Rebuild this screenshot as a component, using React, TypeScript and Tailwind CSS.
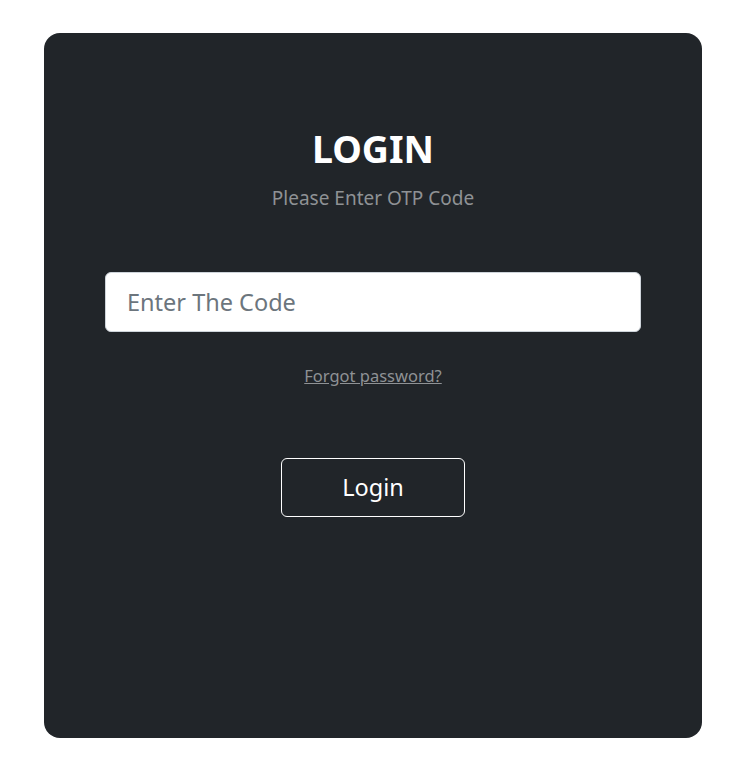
export default function App() {
  return (
    <div
      className="min-h-screen bg-white px-[44px] pt-[33px] pb-[26px]"
      style={{ fontFamily: '"Noto Sans", "Open Sans", sans-serif' }}
    >
      <div className="flex h-[705px] w-[658px] flex-col items-center rounded-[16px] bg-[#212529] px-[61px] pt-[92px]">
        <h1 className="text-[37.5px] font-bold leading-[48px] text-white">LOGIN</h1>
        <p className="mt-[12px] text-[19px] leading-[26px] text-[#8f9295]">Please Enter OTP Code</p>

        <input
          type="text"
          placeholder="Enter The Code"
          className="mt-[61px] h-[60px] w-full rounded-[6px] border border-[#ced4da] bg-white px-[21px] text-[23.5px] text-[#212529] outline-none placeholder:text-[#6c757d]"
        />

        <a href="#" className="mt-[32px] text-[16.5px] leading-[24px] text-[#8f9295] underline">
          Forgot password?
        </a>

        <button
          type="button"
          className="mt-[70px] h-[59px] w-[184px] rounded-[6px] border border-white bg-transparent text-[23.5px] text-white"
        >
          Login
        </button>
      </div>
    </div>
  );
}
